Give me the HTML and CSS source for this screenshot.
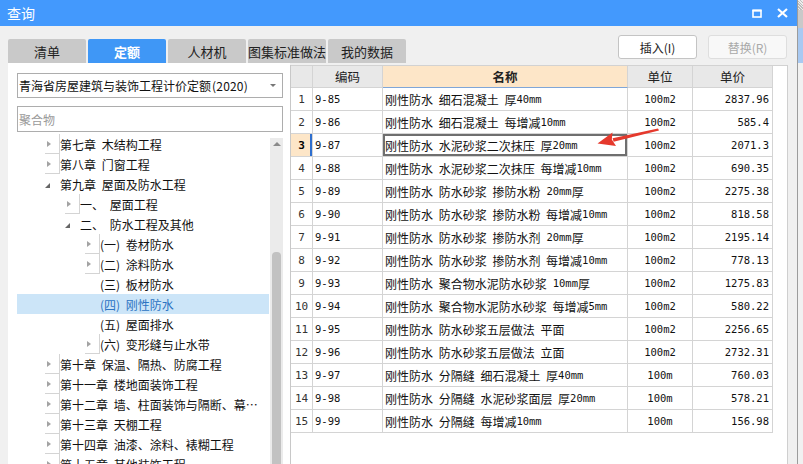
FILE: index.html
```html
<!DOCTYPE html>
<html lang="zh-CN">
<head>
<meta charset="utf-8">
<title>查询</title>
<link rel="stylesheet" href="styles.css">
</head>
<body>
<div class="window">
  <div class="titlebar">
    <span class="title">查询</span>
    <div class="tb-icons">
      <svg class="ic-max" width="10" height="9" viewBox="0 0 10 9"><rect x="1" y="1.5" width="8" height="6.5" fill="none" stroke="#fff" stroke-width="1.6"/><rect x="0.5" y="0.5" width="9" height="2" fill="#fff"/></svg>
      <svg class="ic-close" width="11" height="10" viewBox="0 0 11 10"><path d="M1 1 L10 9 M10 1 L1 9" stroke="#fff" stroke-width="2.2" fill="none"/></svg>
    </div>
  </div>
  <div class="toolbar">
    <div class="tabs">
      <div class="tab">清单</div>
      <div class="tab active">定额</div>
      <div class="tab">人材机</div>
      <div class="tab">图集标准做法</div>
      <div class="tab">我的数据</div>
    </div>
    <div class="actions">
      <div class="btn">插入(I)</div>
      <div class="btn disabled">替换(R)</div>
    </div>
  </div>
  <div class="main">
    <div class="left">
      <div class="select"><span class="sel-text">青海省房屋建筑与装饰工程计价定额<span class="pn">(2020)</span></span><span class="caret"></span></div>
      <div class="search">聚合物</div>
      <div class="treewrap">
        <div class="tree">
          <div class="row l1"><span class="tg c"></span>第七章 木结构工程</div>
          <div class="row l1"><span class="tg c"></span>第八章 门窗工程</div>
          <div class="row l1"><span class="tg e"></span>第九章 屋面及防水工程</div>
          <div class="row l2"><span class="tg c"></span>一、 屋面工程</div>
          <div class="row l2"><span class="tg e"></span>二、 防水工程及其他</div>
          <div class="row l3"><span class="tg c"></span>(一) 卷材防水</div>
          <div class="row l3"><span class="tg c"></span>(二) 涂料防水</div>
          <div class="row l3"><span class="tg"></span>(三) 板材防水</div>
          <div class="row l3 sel"><span class="tg"></span>(四) 刚性防水</div>
          <div class="row l3"><span class="tg"></span>(五) 屋面排水</div>
          <div class="row l3"><span class="tg c"></span>(六) 变形缝与止水带</div>
          <div class="row l1"><span class="tg c"></span>第十章 保温、隔热、防腐工程</div>
          <div class="row l1"><span class="tg c"></span>第十一章 楼地面装饰工程</div>
          <div class="row l1"><span class="tg c"></span>第十二章 墙、柱面装饰与隔断、幕…</div>
          <div class="row l1"><span class="tg c"></span>第十三章 天棚工程</div>
          <div class="row l1"><span class="tg c"></span>第十四章 油漆、涂料、裱糊工程</div>
          <div class="row l1"><span class="tg c"></span>第十五章 其他装饰工程</div>
        </div>
        <div class="vscroll"><span class="up"></span><span class="thumb"></span></div>
      </div>
    </div>
    <div class="grid">
      <div class="gr head">
        <div class="c num"></div>
        <div class="c hc">编码</div>
        <div class="c hc hname">名称</div>
        <div class="c hc">单位</div>
        <div class="c hc">单价</div>
      </div>
      <div class="gr"><div class="c num n">1</div><div class="c code n">9-85</div><div class="c name">刚性防水 细石混凝土 厚<span class="n">40mm</span></div><div class="c unit n">100m2</div><div class="c price n">2837.96</div></div>
      <div class="gr"><div class="c num n">2</div><div class="c code n">9-86</div><div class="c name">刚性防水 细石混凝土 每增减<span class="n">10mm</span></div><div class="c unit n">100m2</div><div class="c price n">585.4</div></div>
      <div class="gr cur"><div class="c num n">3</div><div class="c code n">9-87</div><div class="c name focus">刚性防水 水泥砂浆二次抹压 厚<span class="n">20mm</span></div><div class="c unit n">100m2</div><div class="c price n">2071.3</div></div>
      <div class="gr"><div class="c num n">4</div><div class="c code n">9-88</div><div class="c name">刚性防水 水泥砂浆二次抹压 每增减<span class="n">10mm</span></div><div class="c unit n">100m2</div><div class="c price n">690.35</div></div>
      <div class="gr"><div class="c num n">5</div><div class="c code n">9-89</div><div class="c name">刚性防水 防水砂浆 掺防水粉<span class="n sp">20mm</span>厚</div><div class="c unit n">100m2</div><div class="c price n">2275.38</div></div>
      <div class="gr"><div class="c num n">6</div><div class="c code n">9-90</div><div class="c name">刚性防水 防水砂浆 掺防水粉 每增减<span class="n">10mm</span></div><div class="c unit n">100m2</div><div class="c price n">818.58</div></div>
      <div class="gr"><div class="c num n">7</div><div class="c code n">9-91</div><div class="c name">刚性防水 防水砂浆 掺防水剂<span class="n sp">20mm</span>厚</div><div class="c unit n">100m2</div><div class="c price n">2195.14</div></div>
      <div class="gr"><div class="c num n">8</div><div class="c code n">9-92</div><div class="c name">刚性防水 防水砂浆 掺防水剂 每增减<span class="n">10mm</span></div><div class="c unit n">100m2</div><div class="c price n">778.13</div></div>
      <div class="gr"><div class="c num n">9</div><div class="c code n">9-93</div><div class="c name">刚性防水 聚合物水泥防水砂浆<span class="n sp">10mm</span>厚</div><div class="c unit n">100m2</div><div class="c price n">1275.83</div></div>
      <div class="gr"><div class="c num n">10</div><div class="c code n">9-94</div><div class="c name">刚性防水 聚合物水泥防水砂浆 每增减<span class="n">5mm</span></div><div class="c unit n">100m2</div><div class="c price n">580.22</div></div>
      <div class="gr"><div class="c num n">11</div><div class="c code n">9-95</div><div class="c name">刚性防水 防水砂浆五层做法 平面</div><div class="c unit n">100m2</div><div class="c price n">2256.65</div></div>
      <div class="gr"><div class="c num n">12</div><div class="c code n">9-96</div><div class="c name">刚性防水 防水砂浆五层做法 立面</div><div class="c unit n">100m2</div><div class="c price n">2732.31</div></div>
      <div class="gr"><div class="c num n">13</div><div class="c code n">9-97</div><div class="c name">刚性防水 分隔缝 细石混凝土 厚<span class="n">40mm</span></div><div class="c unit n">100m</div><div class="c price n">760.03</div></div>
      <div class="gr"><div class="c num n">14</div><div class="c code n">9-98</div><div class="c name">刚性防水 分隔缝 水泥砂浆面层 厚<span class="n">20mm</span></div><div class="c unit n">100m</div><div class="c price n">578.21</div></div>
      <div class="gr"><div class="c num n">15</div><div class="c code n">9-99</div><div class="c name">刚性防水 分隔缝 每增减<span class="n">10mm</span></div><div class="c unit n">100m</div><div class="c price n">156.98</div></div>
    </div>
  </div>
</div>
<div class="edge">
  <div class="e1"></div>
  <div class="e2"></div>
  <div class="e3"></div>
  <div class="e4"></div>
</div>
<svg class="arrow" width="803" height="464" viewBox="0 0 803 464">
  <path d="M658 128.4 L659 130.4 L613.6 141.8 L612.6 138.2 Z" fill="#e5392d"/>
  <path d="M597.5 143.6 L612.5 132.4 L611.8 139.4 L616 146 Z" fill="#e5392d"/>
</svg>
</body>
</html>
```
FILE: styles.css
```css
* { box-sizing: border-box; }

body {
  margin: 0;
  width: 803px;
  height: 464px;
  overflow: hidden;
  background: #f0f0f0;
  font-family: "Noto Sans CJK SC", "Noto Sans", sans-serif;
  font-size: 12px;
  color: #111;
  display: flex;
  position: relative;
}

.n {
  font-family: "DejaVu Sans Mono", "Liberation Mono", monospace;
  font-size: 10.5px;
  word-spacing: 0;
}
.sp { margin-left: 6px; }
.pn { margin-left: 1px; letter-spacing: 0.2px; }

.window {
  width: 797px;
  height: 464px;
  display: flex;
  flex-direction: column;
}

.titlebar {
  height: 26px;
  background: #4399fd;
  color: #fff;
  display: flex;
  align-items: center;
  padding: 0 9px 0 7px;
  font-size: 14px;
}
.title { flex: 1; }
.tb-icons { display: flex; align-items: center; gap: 15px; }

.toolbar {
  height: 37px;
  display: flex;
  padding: 0 10px 0 8px;
}
.tabs {
  display: flex;
  gap: 2px;
  align-self: flex-end;
}
.tab {
  width: 78px;
  height: 24px;
  background: #c9c9c9;
  border-radius: 2px 2px 0 0;
  display: flex;
  align-items: center;
  justify-content: center;
  font-size: 13px;
  color: #222;
}
.tab.active {
  background: #3f97f6;
  color: #fff;
  font-weight: bold;
}
.actions {
  margin-left: auto;
  display: flex;
  gap: 11px;
  padding-top: 9px;
}
.btn {
  width: 79px;
  height: 24px;
  border: 1px solid #c4c4c4;
  border-radius: 3px;
  background: #fff;
  display: flex;
  align-items: center;
  justify-content: center;
  font-size: 12px;
  color: #222;
}
.btn.disabled {
  color: #a9a9a9;
  border-color: #dedede;
  background: #f8f8f8;
}

.main {
  flex: 1;
  display: flex;
  padding: 0 9px 0 8px;
  min-height: 0;
}

.left {
  width: 282px;
  background: #fff;
  padding: 10px 7px 0 9px;
  display: flex;
  flex-direction: column;
  min-height: 0;
}
.select {
  height: 25px;
  border: 1px solid #adadad;
  display: flex;
  align-items: center;
  padding: 0 6px 0 1px;
}
.sel-text { flex: 1; white-space: nowrap; }
.caret {
  width: 0;
  height: 0;
  border-left: 3px solid transparent;
  border-right: 3px solid transparent;
  border-top: 3px solid #777;
}
.search {
  height: 26px;
  margin-top: 8px;
  border: 1px solid #adadad;
  padding-left: 1px;
  color: #9a9a9a;
  display: flex;
  align-items: center;
}
.treewrap {
  margin-top: 2px;
  flex: 1;
  display: flex;
  min-height: 0;
  overflow: hidden;
}
.tree { width: 253px; }
.row {
  height: 20px;
  display: flex;
  align-items: center;
  white-space: nowrap;
  word-spacing: 3px;
  font-size: 12px;
  color: #111;
}
.row.l1 { padding-left: 28px; }
.row.l2 { padding-left: 48px; }
.row.l3 { padding-left: 68px; }
.row.sel { background: #cce5f8; color: #2b73c2; }
.tg {
  width: 15px;
  height: 20px;
  flex: none;
  display: flex;
  align-items: center;
}
.tg.c::before {
  content: "";
  width: 0;
  height: 0;
  border-left: 4px solid #a3a3a3;
  border-top: 3.5px solid transparent;
  border-bottom: 3.5px solid transparent;
}
.tg.e::before {
  content: "";
  width: 0;
  height: 0;
  margin-top: 2px;
  border-bottom: 5px solid #666;
  border-left: 5px solid transparent;
}
.vscroll {
  width: 13px;
  margin-left: 1px;
  margin-top: 4px;
  background: #ebebeb;
  display: flex;
  flex-direction: column;
  align-items: center;
}
.up {
  margin-top: 4px;
  width: 0;
  height: 0;
  border-left: 4px solid transparent;
  border-right: 4px solid transparent;
  border-bottom: 4px solid #8a8a8a;
}
.thumb {
  margin-top: 106px;
  flex: 1;
  width: 9px;
  background: #c2c2c2;
  border-radius: 4px 4px 0 0;
}

.grid {
  flex: 1;
  margin-top: 2px;
  background: #fff;
  border-left: 1px solid #c8c8c8;
  border-right: 1px solid #cfcfcf;
}
.gr {
  display: grid;
  grid-template-columns: 22px 70px 245px 65px 80px;
  height: 23px;
}
.gr.head { border-top: 1px solid #d2d2d2; height: 23px; }
.c {
  border-right: 1px solid #d4d4d4;
  border-bottom: 1px solid #d4d4d4;
  display: flex;
  align-items: center;
  white-space: nowrap;
  overflow: hidden;
  padding: 0 2px;
}
.head .c { background: #e8e8e8; justify-content: center; font-size: 12.5px; color: #222; }
.head .hname { background: #fde6c8; font-weight: bold; border-bottom-color: #7fa6d8; }
.num { justify-content: center; color: #333; font-size: 11px; }
.cur .num { background: #fde6c8; font-weight: bold; color: #000; box-shadow: inset -2px 0 0 #2f6fcf; }
.name { word-spacing: 3px; padding-left: 2px; }
.unit { justify-content: center; }
.price { justify-content: flex-end; padding-right: 3px; }
.focus { box-shadow: inset 0 0 0 2px #6f6f6f; }

.edge {
  width: 6px;
  height: 464px;
  display: flex;
  flex-direction: column;
  border-left: 1px solid #9c9c9c;
}
.e1 { height: 10px; background: repeating-linear-gradient(45deg, #bdbdbd 0 1px, #eeeeee 1px 2px); }
.e2 { height: 18px; background: #c9c9c9; }
.e3 { height: 35px; background: #a8c9f2; }
.e4 { flex: 1; background: #f1f1f1; }

.arrow {
  position: absolute;
  left: 0;
  top: 0;
  pointer-events: none;
}
```
